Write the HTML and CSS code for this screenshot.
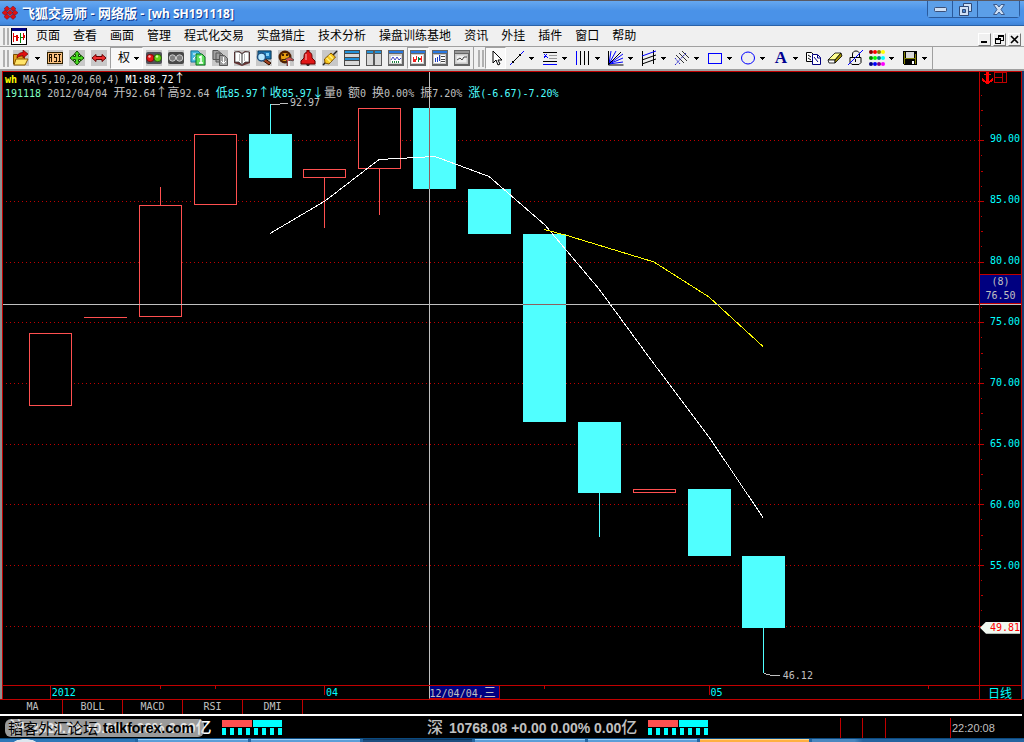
FILE: index.html
```html
<!DOCTYPE html>
<html lang="zh-CN">
<head>
<meta charset="utf-8">
<title>飞狐交易师 - 网络版 - [wh SH191118]</title>
<link rel="stylesheet" href="styles.css">
</head>
<body class="app">
<svg class="defs" width="0" height="0" aria-hidden="true">
  <symbol id="caret" viewBox="0 0 5 3"><path d="M0 0h5v1h-1v1h-1v1h-1v-1h-1v-1h-1z"/></symbol>
</svg>

<header class="titlebar">
  <svg class="logo" viewBox="0 0 16 14" fill="#e01010" stroke="#601830" stroke-width=".5"><path d="M5 0l3 2.700L5 5.400 2 2.700zM11 0l3 2.700-3 2.700-3-2.700zM3 4l3 2.700L3 9.400 0 6.700zM8 4l3 2.700L8 9.400 5 6.700zM13 4l3 2.700-3 2.700-3-2.700zM5 8l3 2.700-3 2.700-3-2.700zM11 8l3 2.700-3 2.700-3-2.700z"/></svg>
  <span class="title">飞狐交易师 - 网络版 - <span class="title-doc">[wh SH191118]</span></span>
  <div class="win-controls">
    <button class="win-btn" aria-label="最小化"><svg width="13" height="5" viewBox="0 0 13 5"><rect x=".5" y=".5" width="12" height="4" rx="1" fill="#cfe0f5" stroke="#3a4f78"/></svg></button>
    <button class="win-btn" aria-label="还原"><svg width="13" height="13" viewBox="0 0 13 13" fill="#cfe0f5" stroke="#2f4a78"><path d="M4.500.5h8v8h-8z"/><path d="M.5 3.500h9v9h-9z"/><path d="M3.500 6.500h3v3h-3z" fill="#4a86d0"/></svg></button>
    <button class="win-btn win-close" aria-label="关闭"><svg width="12" height="11" viewBox="0 0 12 11"><path d="M.5.5h3.500L6 3l2-2.500h3.500L8 5.500l3.500 5H8L6 8l-2 2.500H.5L4 5.500z" fill="#cfe0f5" stroke="#3a5a8c"/></svg></button>
  </div>
</header>

<nav class="menubar">
  <span class="grip"></span>
  <svg class="doc-icon" width="16" height="17" viewBox="0 0 16 17" shape-rendering="crispEdges"><rect width="16" height="17" fill="#000"/><rect x="1" y="1" width="14" height="15" fill="#fff"/><rect x="1" width="14" height="3" fill="#000080"/><path d="M2 5h1v9H2zM3 8h2v1H3zM5 7h2v6H5zM7 9h1v1H7z" fill="#e00000"/><path d="M9 5h1v10H9zM10 9h2v1h-2z" fill="#008000"/><path d="M12 5h1v7h-1zM13 7h1v3h-1z" fill="#e00000"/></svg>
  <div class="menus">
    <button>页面</button><button>查看</button><button>画面</button><button>管理</button><button>程式化交易</button><button>实盘猎庄</button><button>技术分析</button><button>操盘训练基地</button><button>资讯</button><button>外挂</button><button>插件</button><button>窗口</button><button>帮助</button>
  </div>
  <div class="mdi-controls">
    <button aria-label="最小化窗口"><svg width="9" height="9" viewBox="0 0 9 9"><path d="M1 6h6v2H1z"/></svg></button>
    <button aria-label="还原窗口"><svg width="9" height="9" viewBox="0 0 9 9" shape-rendering="crispEdges"><path fill-rule="evenodd" d="M3 0h6v6H6v3H0V3h3zM4 2v1h2v2h2V2zM1 5v3h4V5z"/></svg></button>
    <button aria-label="关闭窗口"><svg width="9" height="9" viewBox="0 0 9 9"><path d="M1 1l7 7M8 1L1 8" stroke="#000" stroke-width="1.600"/></svg></button>
  </div>
</nav>

<div class="toolbars" role="toolbar" aria-label="工具栏">
  <div class="toolbar">
    <span class="grip"></span>
    <button class="tool" aria-label="打开"><svg viewBox="0 0 16 16"><rect width="16" height="16" fill="#c8c8c8"/><path d="M.5 4.500h4l1 1.500h6v8H.5z" fill="#e0a020" stroke="#7a4c00"/><path d="M3 9h12l-3 6H1z" fill="#ffe468" stroke="#8a5a00"/><path d="M4 8c0-4 3-5.500 6-5.500V0l5 4-5 4V5.500C8 5.500 6 6 4 8z" fill="#e01010" stroke="#700" stroke-width=".7"/></svg></button>
    <button class="caret" aria-label="打开选项"><svg><use href="#caret"/></svg></button>
    <button class="tool" aria-label="RSI"><svg viewBox="0 0 16 16" shape-rendering="crispEdges"><rect width="16" height="16" fill="#c8c8c8"/><rect x="0" y="2" width="16" height="12" fill="#302000"/><rect x="1" y="3" width="14" height="10" fill="#f8c080"/><path d="M2.500 12V4.500h2v3h-2M4.500 8v4M9.500 4.500h-2v3h2v4h-3M11 4.500h3M12.500 4v8M11 11.500h3" stroke="#201000" fill="none"/></svg></button>
    <button class="tool" aria-label="放大"><svg viewBox="0 0 16 16"><rect width="16" height="16" fill="#c8c8c8"/><path d="M8 1l3 3.500H9.500v2h2V5L15 8l-3.500 3V9.500h-2v2H11L8 15l-3-3.500h1.500v-2h-2V11L1 8l3.500-3v1.500h2v-2H5z" fill="#48d820" stroke="#104800"/></svg></button>
    <button class="tool" aria-label="左右拉伸"><svg viewBox="0 0 16 16"><rect width="16" height="16" fill="#c8c8c8"/><path d="M1 8l4-3.500v2h6v-2L15 8l-4 3.500v-2H5v2z" fill="#f03030" stroke="#600"/></svg></button>
    <button class="tool-label">权<svg class="caret-icon"><use href="#caret"/></svg></button>
    <button class="tool" aria-label="开始"><svg viewBox="0 0 16 16"><rect width="16" height="16" fill="#c8c8c8"/><rect y="2" width="16" height="12" rx="2" fill="#505058"/><circle cx="4.300" cy="8" r="3.700" fill="#e81818" stroke="#600" stroke-width=".7"/><circle cx="11.700" cy="8" r="3.700" fill="#68d018" stroke="#140" stroke-width=".7"/><circle cx="3.500" cy="6.500" r="1.200" fill="#fbb"/><circle cx="11" cy="6.500" r="1.200" fill="#d0ffa0"/></svg></button>
    <button class="tool" aria-label="停止"><svg viewBox="0 0 16 16"><rect width="16" height="16" fill="#c8c8c8"/><rect y="2" width="16" height="12" rx="2" fill="#484848"/><circle cx="4.500" cy="8" r="3.200" fill="#808080" stroke="#ccc"/><circle cx="11.500" cy="8" r="3.200" fill="#808080" stroke="#ccc"/></svg></button>
    <button class="tool" aria-label="页面切换"><svg viewBox="0 0 16 16"><rect width="16" height="16" fill="#c8c8c8"/><path d="M1 1h7l3 3v8H1z" fill="#48b8e0" stroke="#1878a0"/><path d="M3 4h3v2L3 9h3" stroke="#fff" fill="none"/><path d="M6 4h6l3 3v8H6z" fill="#60e060" stroke="#087020"/><path d="M9 7.500l2-1V13M9 13h4" stroke="#fff" stroke-width="1.500" fill="none"/></svg></button>
    <button class="tool" aria-label="后翻页"><svg viewBox="0 0 16 16" fill="#a0a0a0" stroke="#585858"><rect width="16" height="16" fill="#c8c8c8" stroke="none"/><path d="M1 .5h5l2 2v7H1zM4 3h5l2 2v7H4z"/><path d="M7.500 5.500h5l3 3v7h-8z"/><path d="M11.500 7v6M9 11l2.500 2.500L14 11" stroke="#fff" fill="none"/></svg></button>
    <button class="tool" aria-label="手册"><svg viewBox="0 0 16 16"><rect width="16" height="16" fill="#c8c8c8"/><path d="M0 2l5-1 3 2 3-2 5 1v11l-8 3-8-3z" fill="#633"/><path d="M1 2h4l3 2 3-2h4v10l-4 0-3 3-3-3-4 0z" fill="#fff" stroke="#333" stroke-width=".7"/><path d="M8 4v10" stroke="#333"/><path d="M5.500 4v7M10.500 4v7" stroke="#bbb"/></svg></button>
    <button class="tool" aria-label="查找"><svg viewBox="0 0 16 16"><rect width="16" height="16" fill="#c8c8c8"/><path d="M2 1h13v8H2z" fill="#1878b8" stroke="#083858"/><path d="M10 3h3v3h-3z" fill="#80d0f8"/><path d="M8 8l7 5-2 2-7-5z" fill="#a04020" stroke="#301000"/><circle cx="5.500" cy="7" r="4" fill="#b8e8ff" stroke="#205080" stroke-width="1.500"/></svg></button>
    <button class="tool" aria-label="公式"><svg viewBox="0 0 16 16"><rect width="16" height="16" fill="#c8c8c8"/><circle cx="7" cy="7" r="6.500" fill="#502000"/><circle cx="7" cy="7" r="4" fill="#e8a010"/><path d="M4 4h2v2H4zM8 4h2v2H8zM4 9h5v1H4z" fill="#4a2000"/><path d="M7 9l5-2 4 3-2 1-1-1-2 1v5H9v-5z" fill="#d05050" stroke="#333" stroke-width=".7"/><path d="M10 11h2v5h-2z" fill="#eee"/></svg></button>
    <button class="tool" aria-label="预警"><svg viewBox="0 0 16 16"><rect width="16" height="16" fill="#c8c8c8"/><path d="M6 14h4l-1 2H7z" fill="#333"/><path d="M7 2V0h2v2c3 1 3 3 3 6l3 3v3H1v-3l3-3c0-3 0-5 3-6z" fill="#e01818" stroke="#600"/><path d="M6 4v6" stroke="#fbb"/></svg></button>
    <button class="tool" aria-label="画线"><svg viewBox="0 0 16 16"><rect width="16" height="16" fill="#c8c8c8"/><path d="M1 15L15 1" stroke="#222" stroke-width="1.500"/><path d="M2.500 9l6.500-6 4.500 4-6.500 7-4-1z" fill="#f8c820" stroke="#805000"/><path d="M4.500 8l4 4M7 5l4 4" stroke="#fff080" stroke-width="1.500"/></svg></button>
    <button class="tool" aria-label="水平分割"><svg viewBox="0 0 16 16" shape-rendering="crispEdges"><rect width="16" height="16" fill="#484848"/><path d="M1 1h14v2H1zM1 8h14v2H1z" fill="#2090d8"/><path d="M1 4h14v3H1zM1 11h14v4H1z" fill="#d8d8d8"/></svg></button>
    <button class="tool" aria-label="垂直分割"><svg viewBox="0 0 16 16" shape-rendering="crispEdges"><rect width="16" height="16" fill="#585858"/><path d="M1 1h6v2H1zM9 1h6v2H9z" fill="#2090d8"/><path d="M1 4h6v11H1zM9 4h6v11H9z" fill="#d8d8d8"/></svg></button>
    <button class="tool" aria-label="分时图"><svg viewBox="0 0 16 16"><rect width="16" height="16" fill="#666"/><path d="M1 1h14v2H1z" fill="#2878e0"/><path d="M1 4h13v10H1z" fill="#d0d0d0"/><path d="M3 6h10v7H3z" fill="#fff"/><path d="M3 10l2-3 2 3 2-3 2 3 2-2" stroke="#4040c0" fill="none"/><path d="M4.500 13v-2M6.500 13v-2M8.500 13v-2M10.500 13v-2" stroke="#208040"/></svg></button>
    <button class="tool tool-active" aria-label="K线图"><svg viewBox="0 0 16 16" shape-rendering="crispEdges"><rect width="16" height="16" fill="#666"/><path d="M1 1h14v2H1z" fill="#2878e0"/><path d="M1 4h13v10H1z" fill="#d0d0d0"/><path d="M2 5h11v8H2z" fill="#fff"/><path d="M3 7h1v5H3zM4 9h2v3H4zM6 6h1v4H6zM11 6h1v6h-1zM10 8h1v2h-1z" fill="#f02020"/><path d="M8 7h1v5H8zM9 8h1v2H9z" fill="#008040"/></svg></button>
    <button class="tool" aria-label="报价"><svg viewBox="0 0 16 16" shape-rendering="crispEdges"><rect width="16" height="16" fill="#666"/><path d="M1 1h14v2H1z" fill="#2878e0"/><path d="M1 4h13v10H1z" fill="#c8c8c8"/><path d="M2 5h6v8H2zM9 5h4v8H9z" fill="#fff"/><path d="M3 8h1v4H3zM5 7h1v5H5zM7 5h1v6H7z" fill="#2040c0"/><path d="M9 6h4v1H9zM9 9h4v1H9zM9 11h4v1H9z" fill="#444"/></svg></button>
    <button class="tool" aria-label="走势"><svg viewBox="0 0 16 16"><rect width="16" height="16" fill="#666"/><path d="M1 1h14v2H1z" fill="#999"/><path d="M1 4h13v10H1z" fill="#c8c8c8"/><path d="M2.500 5.500h10v7h-10z" fill="#eee"/><path d="M3 10l3-2 2 2 2-3 3 0" stroke="#444" fill="none"/></svg></button>
  </div>
  <div class="toolbar toolbar-draw">
    <span class="grip"></span>
    <button class="tool tool-pressed" aria-label="选择"><svg viewBox="0 0 16 16"><path d="M5 1v12l3-3 2 5 2-1-2-4h4z" fill="#fff" stroke="#000"/></svg></button>
    <button class="tool" aria-label="直线"><svg viewBox="0 0 16 16"><path d="M1 15L15 1" stroke="#00f"/><path d="M4 12l7-7" stroke="#000"/><path d="M3 11h2v2H3zM10 4h2v2h-2z"/></svg></button>
    <button class="caret" aria-label="直线选项"><svg><use href="#caret"/></svg></button>
    <button class="tool" aria-label="百分比线"><svg viewBox="0 0 16 16" shape-rendering="crispEdges" fill="none"><path d="M1 2.500h14M1 11.500h14" stroke="#000"/><path d="M7 5.500h8M7 8.500h8" stroke="#999"/><path d="M1 14.500h14" stroke="#00f"/><path d="M2 4l4 4M5 4L2 8" stroke="#00f"/></svg></button>
    <button class="caret" aria-label="百分比线选项"><svg><use href="#caret"/></svg></button>
    <button class="tool" aria-label="周期线"><svg viewBox="0 0 16 16" shape-rendering="crispEdges"><path d="M1.500 1v14" stroke="#00f"/><path d="M5.500 1v14M9.500 1v14M13.500 1v14" stroke="#000"/></svg></button>
    <button class="caret" aria-label="周期线选项"><svg><use href="#caret"/></svg></button>
    <button class="tool" aria-label="角度线"><svg viewBox="0 0 16 16" fill="none" stroke="#00f"><path d="M1 14L3 1M1 14L8 1M1 14L15 8M1 14l14-2M1 14L15 4"/><path d="M.5 1v14h15M1 14L13 2" stroke="#000"/></svg></button>
    <button class="caret" aria-label="角度线选项"><svg><use href="#caret"/></svg></button>
    <button class="tool" aria-label="通道线"><svg viewBox="0 0 16 16" fill="none" stroke="#000"><path d="M1.500 1v15M12.500 0v14M1 10l14-5M1 14l14-5"/><path d="M1 6l14-5" stroke="#00f"/></svg></button>
    <button class="caret" aria-label="通道线选项"><svg><use href="#caret"/></svg></button>
    <button class="tool" aria-label="分叉线"><svg viewBox="0 0 16 16" fill="none" stroke="#333"><path d="M2 5l8 8M5 3l8 8M8 1l7 7"/><path d="M1 15L12 3M1 8l5 6" stroke="#22c" stroke-dasharray="2 1"/></svg></button>
    <button class="caret" aria-label="分叉线选项"><svg><use href="#caret"/></svg></button>
    <button class="tool" aria-label="矩形"><svg viewBox="0 0 16 16" shape-rendering="crispEdges"><path d="M1.500 3.500h13v10h-13z" fill="none" stroke="#00f"/></svg></button>
    <button class="caret" aria-label="矩形选项"><svg><use href="#caret"/></svg></button>
    <button class="tool" aria-label="椭圆"><svg viewBox="0 0 16 16"><ellipse cx="8" cy="8" rx="6.500" ry="6" fill="none" stroke="#00f"/></svg></button>
    <button class="caret" aria-label="椭圆选项"><svg><use href="#caret"/></svg></button>
    <button class="tool tool-text">A</button>
    <button class="caret" aria-label="文字选项"><svg><use href="#caret"/></svg></button>
    <button class="tool tool-narrow" aria-label="复制"><svg viewBox="0 0 16 16" fill="#fff"><path d="M.5 2.500h5l2 2v7h-7z" stroke="#000"/><path d="M2 5l3 2M2 8l3 2" stroke="#000"/><path d="M6.500 4.500h5l3 3v7h-8z" stroke="#000080"/><path d="M8 7l4 5M11.500 5v3h3" stroke="#000080" fill="none"/></svg></button>
    <button class="tool tool-narrow" aria-label="橡皮"><svg viewBox="0 0 16 16" stroke="#000" stroke-width=".8"><path d="M1 10L8 3h6l-6 7z" fill="#ffff90"/><path d="M1 10h7v3H2z" fill="#fff"/><path d="M8 10l6-7 1 3-7 7z" fill="#a09000"/></svg></button>
    <button class="tool tool-narrow" aria-label="锁定"><svg viewBox="0 0 16 16" fill="none" stroke="#000"><path d="M4.500 7V4c0-4 7-4 7 0v3M2 7.500h11v5l-2 2H4l-2-2z"/><path d="M7.500 9v3"/><path d="M0 15L15 0" stroke="#00f"/></svg></button>
    <button class="tool" aria-label="颜色"><svg viewBox="0 0 16 16"><circle cx="2" cy="2" r="2" fill="#800000"/><circle cx="6" cy="2" r="2" fill="#f00"/><circle cx="10" cy="2" r="2" fill="#808000"/><circle cx="14" cy="2" r="2" fill="#ff0"/><circle cx="2" cy="8" r="2" fill="#008000"/><circle cx="6" cy="8" r="2" fill="#0f0"/><circle cx="10" cy="8" r="2" fill="#008080"/><circle cx="14" cy="8" r="2" fill="#0ff"/><circle cx="2" cy="14" r="2" fill="#000080"/><circle cx="6" cy="14" r="2" fill="#00f"/><circle cx="10" cy="14" r="2" fill="#800080"/><circle cx="14" cy="14" r="2" fill="#f0f"/></svg></button>
    <button class="caret" aria-label="颜色选项"><svg><use href="#caret"/></svg></button>
    <button class="tool" aria-label="保存"><svg viewBox="0 0 16 16" shape-rendering="crispEdges"><path d="M1 1h14v14H2l-1-1z"/><path d="M2 2h1v12H2zM13 4h1v10h-1zM3 8h10v1H3z" fill="#808000"/><path d="M4 2h8v6H4z" fill="#d8d8d8"/><path d="M10 11h2v3h-2z" fill="#fff"/></svg></button>
    <button class="caret" aria-label="保存选项"><svg><use href="#caret"/></svg></button>
  </div>
</div>

<main class="chart">
  <section class="plot">
    <svg class="plot-svg" viewBox="3 72 976 613" preserveAspectRatio="none" shape-rendering="crispEdges" role="img" aria-label="K线图">
      <path class="grid" d="M6 140.500H979M6 201.500H979M6 262.500H979M6 322.500H979M6 383.500H979M6 444.500H979M6 504.500H979M6 565.500H979M6 626.500H979"/>
      <g class="up">
        <path d="M29.500 333.500h42v72h-42zM139.500 205.500h42v111h-42zM194.500 134.500h42v70h-42zM303.500 169.500h42v8h-42zM358.500 108.500h42v60h-42zM633.500 489.500h42v3h-42z"/>
        <path d="M84 317.500h43M160.500 187v18M324.500 178v50M379.500 169v46"/>
      </g>
      <g class="down">
        <path d="M249 134h43v44h-43zM413 108h43v81h-43zM468 189h43v45h-43zM523 234h43v188h-43zM578 422h43v71h-43zM688 489h43v67h-43zM742 556h43v72h-43z"/>
        <path d="M270 104h1v30h-1zM599 493h1v44h-1zM763 628h1v45h-1z"/>
      </g>
      <path class="ma-short" d="M270 233.500L325 201L379 159.500L435 156.500L489 176.500L545 225L599 289L654 364L709 437L763 517.500"/>
      <path class="ma-long" d="M544 229.500L567 235.500L654 262L709 297L763 346.500"/>
      <path class="leader" d="M271 104.500h9M280 103.500h8M764 673.500l8 2h8"/>
      <path class="cross" d="M429.500 72V685M3 304.500H979"/>
      <path class="cross-over" d="M429.500 108V189M523 304.500H566"/>
    </svg>
    <div class="legend">
      <p><b class="yellow">wh</b> MA(5,10,20,60,4) <span class="white">M1:88.72<i class="cjk">↑</i></span></p>
      <p><span class="green">191118</span> 2012/04/04 <i class="cjk">开</i>92.64<i class="cjk">↑高</i>92.64 <span class="cyan"><i class="cjk">低</i>85.97<i class="cjk">↑收</i>85.97<i class="cjk">↓</i></span><i class="cjk">量</i>0 <i class="cjk">额</i>0 <i class="cjk">换</i>0.00% <i class="cjk">振</i>7.20% <span class="cyan"><i class="cjk">涨</i>(-6.67)-7.20%</span></p>
    </div>
    <span class="mark mark-high">92.97</span>
    <span class="mark mark-low">46.12</span>
  </section>

  <aside class="prices">
    <svg class="ticks" viewBox="980 72 41 613" preserveAspectRatio="none" shape-rendering="crispEdges">
      <path d="M980 140.500h4M980 201.500h4M980 262.500h4M980 322.500h4M980 383.500h4M980 444.500h4M980 504.500h4M980 565.500h4M980 626.500h4"/>
      <path d="M981 110.500h2M981 171.500h2M981 231.500h2M981 292.500h2M981 353.500h2M981 413.500h2M981 474.500h2M981 535.500h2M981 595.500h2M981 95.500h1M981 125.500h1M981 155.500h1M981 186.500h1M981 216.500h1M981 246.500h1M981 307.500h1M981 337.500h1M981 368.500h1M981 398.500h1M981 429.500h1M981 459.500h1M981 489.500h1M981 519.500h1M981 549.500h1M981 580.500h1M981 610.500h1"/>
    </svg>
    <svg class="anchor" width="26" height="12" viewBox="0 0 26 12" shape-rendering="crispEdges"><path d="M4 0h3v2h2v1H7v6h1V8h1V7h1V6h1v3h-1v1H8v1H7v1H4v-1H3v-1H1V9H0V6h1v1h1v1h1v1h1V3H2V2h2z" fill="#f00"/><path d="M12.500.5h12v10h-12zM20.500 1v10M12 5.500h8" fill="none" stroke="#c00000"/></svg>
    <ol class="price-labels"><li>90.00</li><li>85.00</li><li>80.00</li><li>75.00</li><li>70.00</li><li>65.00</li><li>60.00</li><li>55.00</li><li>50.00</li></ol>
    <div class="cursor-price"><span>(8)</span><span>76.50</span></div>
    <div class="cursor-line"></div>
    <div class="last-price">49.81</div>
  </aside>

  <div class="dates">
    <svg class="ticks" viewBox="3 686 976 13" preserveAspectRatio="none" shape-rendering="crispEdges"><path d="M50.500 686v13M324.500 686v9M709.500 686v9M160.500 686v3M215.500 686v3M544.500 686v3M928.500 686v3"/></svg>
    <span class="date date-year">2012</span>
    <span class="date date-apr">04</span>
    <span class="date date-may">05</span>
    <span class="date-cursor">12/04/04,<i class="cjk">三</i></span>
  </div>
  <button class="period">日线</button>
</main>

<nav class="tabs"><button>MA</button><button>BOLL</button><button>MACD</button><button>RSI</button><button>DMI</button></nav>

<footer class="status">
  <div class="index index-sh">
    <span class="index-text"><i class="han">沪</i> 2620.78 +0.00 0.00% 0.00<i class="han">亿</i></span>
    <span class="meter"><i class="meter-up"></i><i class="meter-down"></i><i class="meter-dots"></i></span>
    <div class="watermark"><span>韬客外汇论坛</span><b>talkforex.com</b></div>
  </div>
  <div class="index index-sz">
    <span class="index-text"><i class="han">深</i> 10768.08 +0.00 0.00% 0.00<i class="han">亿</i></span>
    <span class="meter"><i class="meter-up"></i><i class="meter-down"></i><i class="meter-dots"></i></span>
  </div>
  <div class="cells"><i></i><i></i><i class="cell-wide"></i></div>
  <time class="clock">22:20:08</time>
</footer>

<div class="taskbar"><i class="task-start"></i><i class="task"></i><i class="task"></i><i class="task task-dark"></i><i class="task"></i><i class="task"></i><i class="task task-alert"></i><i class="task-end"></i></div>
</body>
</html>
```
FILE: styles.css
```css
* { box-sizing: border-box; }

.app {
  margin: 0;
  height: 100vh;
  display: flex;
  flex-direction: column;
  overflow: hidden;
  background: #000;
  font: 12px/14px "Liberation Sans", "Noto Sans CJK SC", sans-serif;
  color: #000;
}
.defs { position: absolute; }
button { font: inherit; color: inherit; margin: 0; padding: 0; border: 0; background: none; }
i { font-style: normal; }
svg { display: block; flex: none; }

/* title bar */
.titlebar {
  height: 26px;
  flex: none;
  display: flex;
  align-items: center;
  gap: 4px;
  padding-left: 2px;
  border-top: 1px solid #5a5a64;
  border-bottom: 1px solid #2a62a8;
  background: linear-gradient(#66a8f0, #4a92e8 40%, #4a92e8 80%, #3f84d8);
}
.logo { width: 16px; height: 14px; }
.title {
  flex: 1;
  color: #fff;
  font: bold 13px/22px "Noto Sans", "Noto Sans CJK SC", sans-serif;
  text-shadow: 1px 1px 0 #10388c;
  white-space: nowrap;
}
.title-doc { font-size: 12px; }
.win-controls {
  display: flex;
  align-self: flex-start;
  margin-right: 4px;
  height: 17px;
  border: 1px solid #2a5a9c;
  border-top: 0;
  border-radius: 0 0 4px 4px;
}
.win-btn {
  width: 25px;
  display: flex;
  align-items: center;
  justify-content: center;
  border-right: 1px solid #2a5a9c;
  background: #5c9fe8;
}
.win-close { width: 41px; border-right: 0; }

/* menu bar */
.menubar {
  height: 20px;
  flex: none;
  display: flex;
  align-items: center;
  padding: 0 3px;
  background: #f0f0f0;
}
.grip {
  width: 6px;
  height: 17px;
  flex: none;
  border: solid #b0b0b0;
  border-width: 0 2px;
}
.doc-icon { margin: 0 9px 0 2px; }
.menus { display: flex; flex: 1; gap: 13px; white-space: nowrap; }
.mdi-controls { display: flex; gap: 2px; align-self: flex-end; }
.mdi-controls button {
  width: 13px;
  height: 13px;
  display: flex;
  align-items: center;
  justify-content: center;
  background: #f0f0f0;
  border: 1px solid;
  border-color: #fff #777 #777 #fff;
}

/* toolbars */
.toolbars {
  height: 25px;
  flex: none;
  display: flex;
  padding-left: 3px;
  border-top: 1px solid #a0a0a0;
  border-bottom: 2px solid #a0a0a0;
  background: #f0f0f0;
}
.toolbar { display: flex; align-items: center; border-right: 1px solid #a0a0a0; }
.toolbar .grip { margin-right: 1px; }
.toolbar-draw { padding-left: 4px; }
.tool {
  width: 22px;
  height: 22px;
  display: flex;
  align-items: center;
  justify-content: center;
}
.tool svg { width: 16px; height: 16px; }
.tool-narrow { width: 21px; }
.tool-active, .tool-pressed { background: #f8f8f8; border: 1px solid; border-color: #a0a0a0 #fff #fff #a0a0a0; }
.tool-pressed { width: 21px; }
.tool-text { color: #000090; font: bold 17px/20px "Liberation Serif", serif; }
.caret { width: 11px; height: 22px; display: flex; align-items: center; padding-left: 1px; }
.caret svg, .caret-icon { width: 5px; height: 3px; }
.toolbar:first-child .caret { width: 12px; padding-left: 3px; }
.tool-label {
  width: 33px;
  height: 22px;
  display: flex;
  align-items: center;
  justify-content: center;
  gap: 4px;
  padding-left: 4px;
  background: #f8f8f8;
  border: 1px solid;
  border-color: #a0a0a0 #fff #fff #a0a0a0;
}

/* chart */
.chart {
  flex: 1;
  min-height: 0;
  display: grid;
  grid-template: minmax(0, 1fr) 14px / minmax(0, 1fr) 43px;
  border: solid #c00000;
  border-width: 1px 0 0 1px;
  margin: 0 2px;
  font: 10px/14px "DejaVu Sans Mono", monospace;
  color: #c0c0c0;
  box-shadow: -2px 0 #909090, 2px 0 #183c70;
}
.cjk { font: 12px/12px "Noto Sans CJK SC", sans-serif; }
.plot { position: relative; }
.plot-svg, .ticks { position: absolute; inset: 0; width: 100%; height: 100%; }
.plot-svg path, .ticks path { vector-effect: non-scaling-stroke; }
.grid { stroke: #c00000; stroke-dasharray: 1 3; }
.up { fill: #000; stroke: #ff5050; }
.down { fill: #50ffff; }
.ma-short { fill: none; stroke: #fff; }
.ma-long { fill: none; stroke: #ff0; }
.leader { fill: none; stroke: #c0c0c0; }
.cross { stroke: #c0c0c0; }
.cross-over { stroke: #8f5f5f; }
.legend { position: relative; padding-left: 2px; line-height: 12px; }
.legend p { margin: 0; height: 14px; white-space: nowrap; }
.yellow { color: #ff0; }
.white { color: #fff; }
.green { color: #80ffc0; }
.cyan { color: #50ffff; }
.mark { position: absolute; transform: translateY(-50%); }
.mark-high { left: 29.4%; top: 5.1%; }
.mark-low { left: 79.9%; top: 98.6%; }

.prices {
  position: relative;
  border: solid #c00000;
  border-width: 0 1px;
}
.ticks path { stroke: #c00000; fill: none; }
.anchor { position: absolute; top: 0; left: 2px; }
.price-labels {
  height: 100%;
  margin: 0;
  padding: 0 1px 0 0;
  list-style: none;
  display: flex;
  flex-direction: column;
  color: #0ff;
  text-align: right;
}
.price-labels::before { content: ""; flex: 37 0 0; }
.price-labels::after { content: ""; flex: 28 0 0; }
.price-labels li { flex: 61 0 0; display: flex; align-items: center; justify-content: flex-end; }
.cursor-price {
  position: absolute;
  left: 0;
  right: 0;
  top: 33%;
  height: 30px;
  display: flex;
  flex-direction: column;
  align-items: center;
  border: solid #c00000;
  border-width: 1px 0;
  background: #000080;
}
.cursor-line { position: absolute; left: 0; right: 0; top: 37.9%; height: 1px; background: #c0c0c0; }
.last-price {
  position: absolute;
  left: 0;
  right: 1px;
  top: 89.7%;
  height: 12px;
  line-height: 12px;
  text-align: right;
  color: #f00;
  background: #f0f8f0;
  clip-path: polygon(0 50%, 6px 0, 100% 0, 100% 100%, 6px 100%);
}

.dates { position: relative; border-top: 1px solid #c00000; border-right: 1px solid #c00000; margin-right: -1px; line-height: 13px; }
.date { position: absolute; color: #0ff; }
.date-year { left: 5%; }
.date-apr { left: 33.1%; }
.date-may { left: 72.5%; }
.date-cursor {
  position: absolute;
  left: 43.6%;
  width: 71px;
  height: 13px;
  line-height: 12px;
  white-space: nowrap;
  background: #000080;
  border: solid #c00000;
  border-width: 0 1px 1px 0;
  border-left: 1px solid #c0c0c0;
}
.period {
  border: solid #c00000;
  border-width: 1px 1px 0 0;
  font: 12px/12px "Noto Sans CJK SC", sans-serif;
  color: #0ff;
}

/* indicator tabs */
.tabs {
  height: 17px;
  flex: none;
  display: flex;
  margin: 0 2px 0 0;
  padding-left: 3px;
  border-top: 1px solid #c00000;
  border-bottom: 2px solid #fff;
  font: 10px/14px "DejaVu Sans Mono", monospace;
  color: #c0c0c0;
}
.tabs button { width: 60px; border-right: 1px solid #c00000; }

/* status bar */
.status {
  height: 22px;
  flex: none;
  display: grid;
  grid-template-columns: 418fr 422fr 110fr 74fr;
  color: #c0c0c0;
}
.index { position: relative; display: flex; align-items: center; gap: 6px; padding-left: 9px; }
.index-text {
  font: bold 14px/20px "Liberation Sans", sans-serif;
  white-space: nowrap;
}
.index-sh .index-text { width: 207px; color: #fff; }
.index-sz .index-text { width: 215px; }
.han { font: 500 16px/20px "Noto Sans CJK SC", sans-serif; margin-right: 2px; }
.meter { display: grid; grid-template: 7px 7px / 30px 29px; gap: 1px; }
.meter-up { background: #ff5050; }
.meter-down { background: #0ff; }
.meter-dots { grid-column: 1 / 3; background: repeating-linear-gradient(90deg, #0ff 0 4px, #000 4px 8px); }
.watermark {
  position: absolute;
  left: 5px;
  top: 3px;
  width: 199px;
  height: 18px;
  display: flex;
  align-items: center;
  gap: 5px;
  padding-left: 3px;
  border-radius: 6px;
  background: rgba(220, 220, 220, .7);
  color: #000;
  white-space: nowrap;
  font: 15px/18px "Noto Sans CJK SC", sans-serif;
}
.watermark b { font: bold 14px/18px "Liberation Sans", sans-serif; }
.cells { display: flex; padding-top: 2px; }
.cells i { flex: 22; border-left: 1px solid #c00000; }
.cells .cell-wide { flex: 66; }
.clock { margin-top: 2px; padding-left: 1px; border-left: 1px solid #c00000; font-size: 11px; line-height: 20px; }

/* task bar */
.taskbar { height: 4px; flex: none; display: flex; gap: 3px; background: #2468a4; border-top: 1px solid #0a4a80; }
.task-start { flex: 136; background: radial-gradient(ellipse 12px 4px at 25px 4px, #dde6ee 90%, transparent), #2e78b8; }
.task { flex: 110; background: #5a9ed8; border-top: 1px solid #9cd0f8; }
.task-dark { background: #1c4e80; border-color: #103860; }
.task-alert { background: #ffb040; border-color: #ffd890; }
.task-end { flex: 213; background: linear-gradient(90deg, #4a88c0 20%, #2464a0 24%); }
```
